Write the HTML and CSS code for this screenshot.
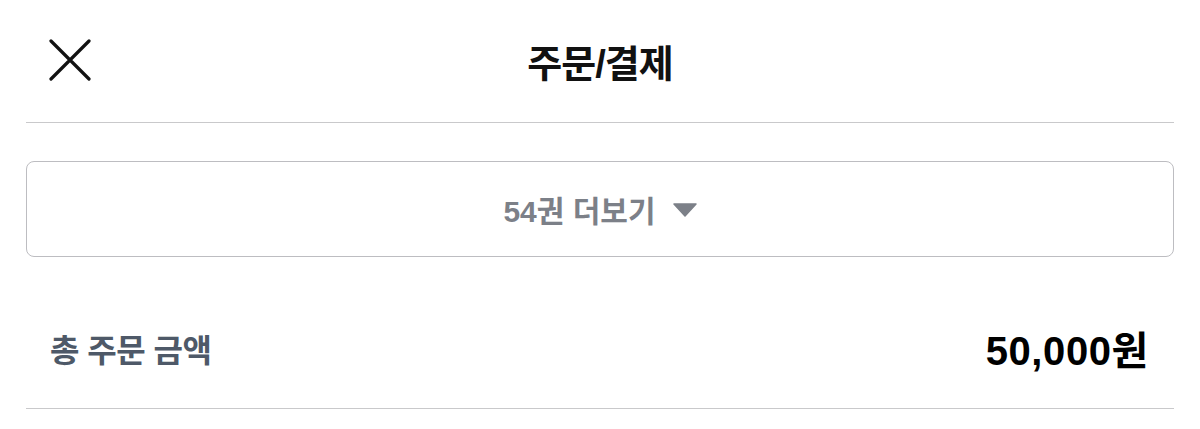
FILE: index.html
```html
<!DOCTYPE html>
<html lang="ko">
<head>
<meta charset="utf-8">
<link rel="stylesheet" href="styles.css">
</head>
<body>
<div class="page">
  <header class="header">
    <button class="close" aria-label="닫기">
      <svg width="42" height="42" viewBox="0 0 42 42"><path d="M2 2 L40 40 M40 2 L2 40" stroke="#111" stroke-width="3.2" stroke-linecap="round" fill="none"/></svg>
    </button>
    <h1 class="title">주문/결제</h1>
  </header>
  <button class="more">
    <span class="more-text">54권 더보기</span>
    <svg class="caret" width="24" height="14" viewBox="0 0 24 14"><path d="M1 1 H23 L12 13 Z" fill="#7c8088" stroke="#7c8088" stroke-width="1.5" stroke-linejoin="round"/></svg>
  </button>
  <div class="total">
    <span class="total-label">총 주문 금액</span>
    <span class="total-value">50,000원</span>
  </div>
</div>
</body>
</html>
```
FILE: styles.css
```css
* { box-sizing: border-box; }
html, body { margin: 0; padding: 0; background: #fff; }
body {
  font-family: "Liberation Sans", "Noto Sans CJK KR", sans-serif;
  color: #111;
}
.page {
  padding: 0 26px;
}
.header {
  position: relative;
  height: 123px;
  border-bottom: 1px solid #c9c9cb;
  display: flex;
  align-items: center;
  justify-content: center;
}
.close {
  position: absolute;
  left: 23px;
  top: 39px;
  padding: 0;
  border: 0;
  background: none;
  width: 42px;
  height: 42px;
  display: flex;
}
.title {
  margin: 0;
  font-size: 38px;
  font-weight: 700;
  letter-spacing: -1px;
  color: #111;
  padding-bottom: 2px;
}
.more {
  margin-top: 38px;
  width: 100%;
  height: 96px;
  border: 1px solid #bdbdc1;
  border-radius: 8px;
  background: #fff;
  display: flex;
  align-items: center;
  justify-content: center;
  gap: 17px;
  font-family: inherit;
  padding: 0;
}
.more-text {
  font-size: 30px;
  font-weight: 700;
  color: #7c8088;
  letter-spacing: 0;
}
.caret { margin-top: 2px; }
.total {
  height: 152px;
  border-bottom: 1px solid #c9c9cb;
  display: flex;
  align-items: center;
  justify-content: space-between;
  padding: 30px 25px 0 24px;
}
.total-label {
  font-size: 32px;
  font-weight: 700;
  color: #4e5968;
  letter-spacing: -0.5px;
}
.total-value {
  font-size: 40px;
  font-weight: 700;
  color: #000;
  letter-spacing: 0.6px;
}
```
